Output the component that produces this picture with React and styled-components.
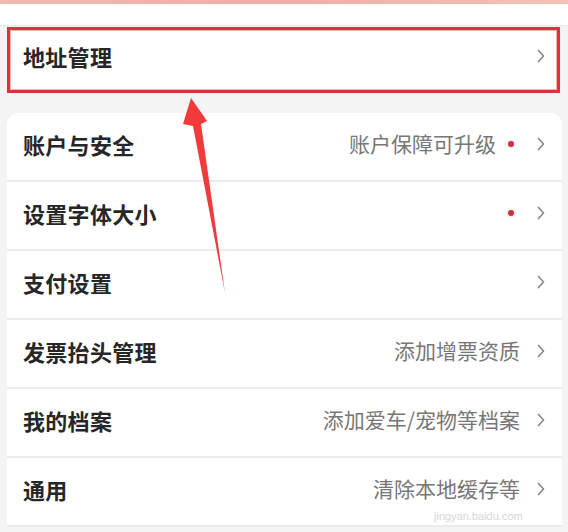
import React from 'react';
import styled, { createGlobalStyle } from 'styled-components';

const GlobalStyle = createGlobalStyle`
  html, body {
    margin: 0;
    padding: 0;
    background: #f4f4f4;
  }
  body {
    font-family: "Noto Sans CJK SC", "Noto Sans", sans-serif;
  }
`;

const Page = styled.div`
  position: relative;
  width: 568px;
  height: 532px;
  overflow: hidden;
  background: #f4f4f4;
`;

const TopStrip = styled.div`
  height: 4px;
  background: linear-gradient(90deg, #f3b9ad, #f0aea4 50%, #f5c2b4);
`;

const TopGap = styled.div`
  height: 21px;
  background: #ffffff;
  border-bottom: 1px solid #ebebeb;
`;

const HighlightCard = styled.div`
  display: flex;
  align-items: center;
  box-sizing: border-box;
  height: 66px;
  margin: 1px 8px 0 7px;
  padding: 0 12px 8px 13px;
  background: #ffffff;
  border: 3px solid #d6353d;
  box-shadow: inset 0 0 0 1px #f4b3b3;
`;

const Card = styled.div`
  margin: 20px 6px 0 7px;
  background: #ffffff;
  border-radius: 12px 12px 0 0;
`;

const Row = styled.div`
  display: flex;
  align-items: center;
  box-sizing: border-box;
  height: 69px;
  padding: 0 17px 6px 16px;
  border-bottom: 2px solid #ececec;
`;

const Title = styled.span`
  flex: 1;
  font-size: 22px;
  line-height: 1;
  font-weight: 700;
  color: #262626;
  letter-spacing: 0.3px;
`;

const Sub = styled.span`
  font-size: 21px;
  line-height: 1;
  color: #777777;
  margin-right: ${(p) => (p.dot ? '12px' : '17px')};
`;

const Dot = styled.span`
  width: 6px;
  height: 6px;
  border-radius: 50%;
  background: #c9343c;
  margin-right: 23px;
  box-shadow: 0 0 3px rgba(240, 120, 120, 0.5);
`;

const Overlay = styled.svg`
  position: absolute;
  left: 0;
  top: 0;
  pointer-events: none;
`;

const Watermark = styled.span`
  position: absolute;
  left: 434px;
  top: 510px;
  font-family: "Liberation Sans", sans-serif;
  font-size: 11px;
  color: #d6d6d6;
`;

const Chevron = () => (
  <svg width="8" height="14" viewBox="0 0 8 14">
    <polyline points="1.5,1.5 6.5,7 1.5,12.5" fill="none" stroke="#8a8a8a" strokeWidth="1.7" strokeLinecap="round" strokeLinejoin="round" />
  </svg>
);

const rows = [
  { title: '账户与安全', sub: '账户保障可升级', dot: true },
  { title: '设置字体大小', sub: '', dot: true },
  { title: '支付设置', sub: '' },
  { title: '发票抬头管理', sub: '添加增票资质' },
  { title: '我的档案', sub: '添加爱车/宠物等档案' },
  { title: '通用', sub: '清除本地缓存等' },
];

export default function App() {
  return (
    <Page>
      <GlobalStyle />
      <TopStrip />
      <TopGap />
      <HighlightCard>
        <Title>地址管理</Title>
        <Chevron />
      </HighlightCard>
      <Card>
        {rows.map((r) => (
          <Row key={r.title}>
            <Title>{r.title}</Title>
            {r.sub && <Sub dot={r.dot}>{r.sub}</Sub>}
            {r.dot && <Dot />}
            <Chevron />
          </Row>
        ))}
      </Card>
      <Watermark>jingyan.baidu.com</Watermark>
      <Overlay width="568" height="532" viewBox="0 0 568 532">
        <polygon points="191,98 207,121 201,124 225,293 193,126 183,124" fill="#f23a3a" />
      </Overlay>
    </Page>
  );
}
